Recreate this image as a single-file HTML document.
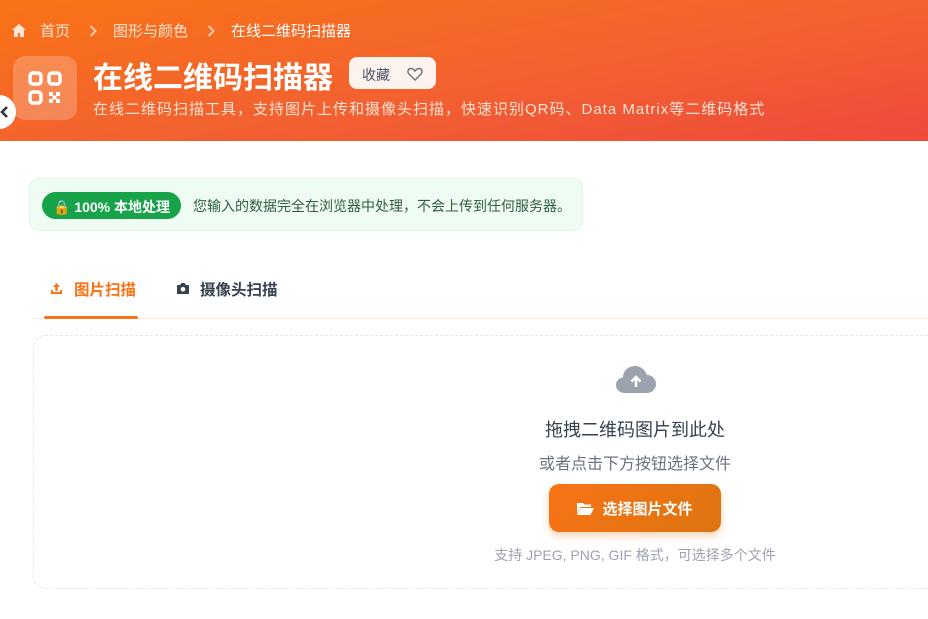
<!DOCTYPE html>
<html><head><meta charset="utf-8"><style>
*{margin:0;padding:0;box-sizing:border-box}
body{width:928px;height:619px;overflow:hidden;background:#fff;font-family:"Liberation Sans","Noto Sans CJK SC",sans-serif;position:relative}
.hdr{position:absolute;left:0;top:0;width:928px;height:141px;background:linear-gradient(170deg,#f97316 0%,#f26130 55%,#ef4a3c 100%)}
.bc{position:absolute;top:20px;left:12px;font-size:15px;color:#fde5d6;display:flex;align-items:center;white-space:nowrap}
.bc .sep{margin:0 16px 0 19px;display:inline-block}
.logo{position:absolute;left:13px;top:56px;width:64px;height:64px;border-radius:12px;background:rgba(255,255,255,.22)}
h1{position:absolute;left:93px;top:53px;font-size:30px;font-weight:bold;color:#fff;white-space:nowrap}
.fav{position:absolute;left:349px;top:57px;width:87px;height:32px;border-radius:8px;background:#fdf3ee;font-size:14px;color:#4b5563;padding:8px 0 0 13px}
.sub{position:absolute;left:93px;top:98px;font-size:15px;letter-spacing:1px;color:#fde2d4;white-space:nowrap}
.circ{position:absolute;left:-18px;top:95px;width:34px;height:34px;border-radius:50%;background:#fff}
.ban{position:absolute;left:29px;top:178px;width:554px;height:53px;border-radius:10px;background:#effcf3;border:1px solid #e2f6e8}
.badge{position:absolute;left:12px;top:13px;width:139px;height:27px;border-radius:14px;background:#16a34a;color:#fff;font-weight:bold;font-size:14px;padding:5px 0 0 11px;white-space:nowrap}
.bt{position:absolute;left:163px;top:17px;font-size:14px;color:#2f5d3f;white-space:nowrap}
.tab{position:absolute;top:278px;font-size:15.5px;font-weight:bold;white-space:nowrap}
.line{position:absolute;left:32px;top:318px;width:896px;height:1px;background:#fde8d7}
.ul{position:absolute;left:44px;top:316px;width:94px;height:3px;background:#f97316;border-radius:2px}
.dz{position:absolute;left:33px;top:335px;width:1210px;height:254px;border:1.5px dashed #e5e7eb;border-radius:12px}
.c{position:absolute;left:335px;width:600px;text-align:center;white-space:nowrap}
.btn{position:absolute;left:549px;top:484px;width:172px;height:48px;border-radius:10px;background:linear-gradient(135deg,#f97316,#dc7410);box-shadow:0 4px 8px rgba(234,120,20,.3);color:#fff;font-weight:bold;font-size:15px;text-align:center;padding-top:14px}
</style></head><body>
<div class="hdr">
 <div class="bc"><svg width="14" height="13" viewBox="0 0 14 13" style="margin-right:14px"><path d="M7 0L0 6h2v7h4V9h2v4h4V6h2z" fill="#fde5d6"/></svg>首页<svg class="sep" width="8" height="12" viewBox="0 0 8 12"><path d="M1.5 1l5 5-5 5" fill="none" stroke="#fcd3bd" stroke-width="1.8"/></svg>图形与颜色<svg class="sep" width="8" height="12" viewBox="0 0 8 12"><path d="M1.5 1l5 5-5 5" fill="none" stroke="#fcd3bd" stroke-width="1.8"/></svg><span style="color:#fff">在线二维码扫描器</span></div>
 <div class="logo"><svg width="64" height="64" viewBox="0 0 64 64">
  <g fill="none" stroke="#fff" stroke-width="3.5"><rect x="17" y="17" width="11" height="11" rx="3"/><rect x="36" y="17" width="11" height="11" rx="3"/><rect x="17" y="36" width="11" height="11" rx="3"/></g>
  <g fill="#fff"><rect x="36" y="36" width="4" height="4"/><rect x="43" y="36" width="4" height="4"/><rect x="39.5" y="39.5" width="4" height="4"/><rect x="36" y="43" width="4" height="4"/><rect x="43" y="43" width="4" height="4"/></g></svg></div>
 <h1>在线二维码扫描器</h1>
 <div class="fav">收藏<svg width="16" height="14" viewBox="0 0 16 14" style="position:absolute;left:58px;top:10px"><path d="M8 13L2 7C0 5 1 1.5 4 1.5c1.8 0 3 1.3 4 2.5 1-1.2 2.2-2.5 4-2.5 3 0 4 3.5 2 5.5z" fill="none" stroke="#6b7280" stroke-width="1.4"/></svg></div>
 <div class="sub">在线二维码扫描工具，支持图片上传和摄像头扫描，快速识别QR码、Data Matrix等二维码格式</div>
</div>
<div class="circ"><svg width="34" height="34" viewBox="0 0 34 34"><path d="M25 12l-5 5 5 5" fill="none" stroke="#333" stroke-width="2.5"/></svg></div>
<div class="ban"><div class="badge">🔒 100% 本地处理</div><div class="bt">您输入的数据完全在浏览器中处理，不会上传到任何服务器。</div></div>
<div class="tab" style="left:50px;color:#f97316"><svg width="13" height="13" viewBox="0 0 13 13" style="margin-right:11px"><path d="M6.5 1L3 5h2.3v4h2.4V5H10zM1 8v4h11V8h-2v2H3V8z" fill="#f97316"/></svg>图片扫描</div>
<div class="tab" style="left:176px;color:#374151"><svg width="14" height="13" viewBox="0 0 14 13" style="margin-right:10px"><path d="M1 3h3l1.5-2h3L10 3h3v9H1z" fill="#374151"/><circle cx="7" cy="7.3" r="2.3" fill="#fff"/></svg>摄像头扫描</div>
<div class="line"></div><div class="ul"></div>
<div class="dz"></div>
<svg style="position:absolute;left:615px;top:363px" width="42" height="32" viewBox="0 0 42 32"><path d="M10 30C4 30 1 26 1 22c0-4 3-7 7-7.5C8 8 13 3 20 3c6 0 10 4 12 9 5 0 9 4 9 9 0 5-4 9-9 9z" fill="#9ca3af"/><path d="M21 24V14M16.5 18.5L21 14l4.5 4.5" fill="none" stroke="#fff" stroke-width="2.6"/></svg>
<div class="c" style="top:416px;font-size:18px;color:#374151">拖拽二维码图片到此处</div>
<div class="c" style="top:450px;font-size:16px;color:#6b7280">或者点击下方按钮选择文件</div>
<div class="btn"><svg width="17" height="13" viewBox="0 0 17 13" style="margin-right:8px;vertical-align:-1px"><path d="M0 1h6l1.5 1.5H14V5H3.5L0 12z" fill="#fff"/><path d="M3.5 6H17l-3.5 7H0z" fill="#fff"/></svg>选择图片文件</div>
<div class="c" style="top:545px;font-size:14px;color:#9ca3af">支持 JPEG, PNG, GIF 格式，可选择多个文件</div>
</body></html>
